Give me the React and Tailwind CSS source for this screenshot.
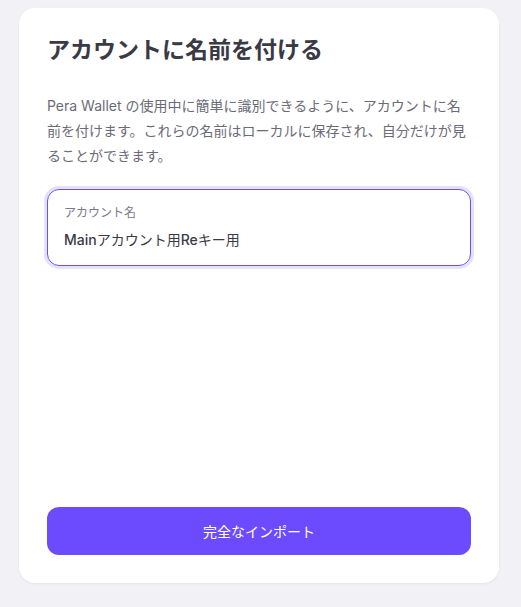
export default function App() {
  return (
    <div
      className="min-h-[607px] bg-[#f1f1f6] pt-2 pl-[19px]"
      style={{ fontFamily: "Inter, 'Noto Sans CJK JP', sans-serif" }}
    >
      <div className="w-[480px] h-[575px] bg-white rounded-2xl shadow-[0_1px_3px_rgba(0,0,0,0.06)] p-7 flex flex-col">
        {/* Header */}
        <h1 className="text-[23px] font-bold text-[#3a3a45] leading-[30px] -mt-[1px]">
          アカウントに名前を付ける
        </h1>
        <p className="mt-[28px] text-[14px] leading-[25px] text-[#6b6b78]">
          Pera Wallet の使用中に簡単に識別できるように、アカウントに名前を付けます。これらの名前はローカルに保存され、自分だけが見ることができます。
        </p>

        {/* Input */}
        <div className="mt-[21px] rounded-xl border border-[#6b4cff] ring-[3px] ring-[#e6e1fb] px-4 pt-[14px] pb-[15px]">
          <div className="text-[12px] leading-[18px] text-[#7a7a86]">アカウント名</div>
          <div className="mt-[8px] text-[14px] leading-[20px] text-[#3a3a45]">
            <span className="font-medium">Main</span>アカウント用<span className="font-medium">Re</span>キー用
          </div>
        </div>

        <div className="flex-1" />

        <button className="h-12 w-full rounded-xl bg-[#6c4bff] text-white text-[14px]">
          完全なインポート
        </button>
      </div>
    </div>
  );
}
